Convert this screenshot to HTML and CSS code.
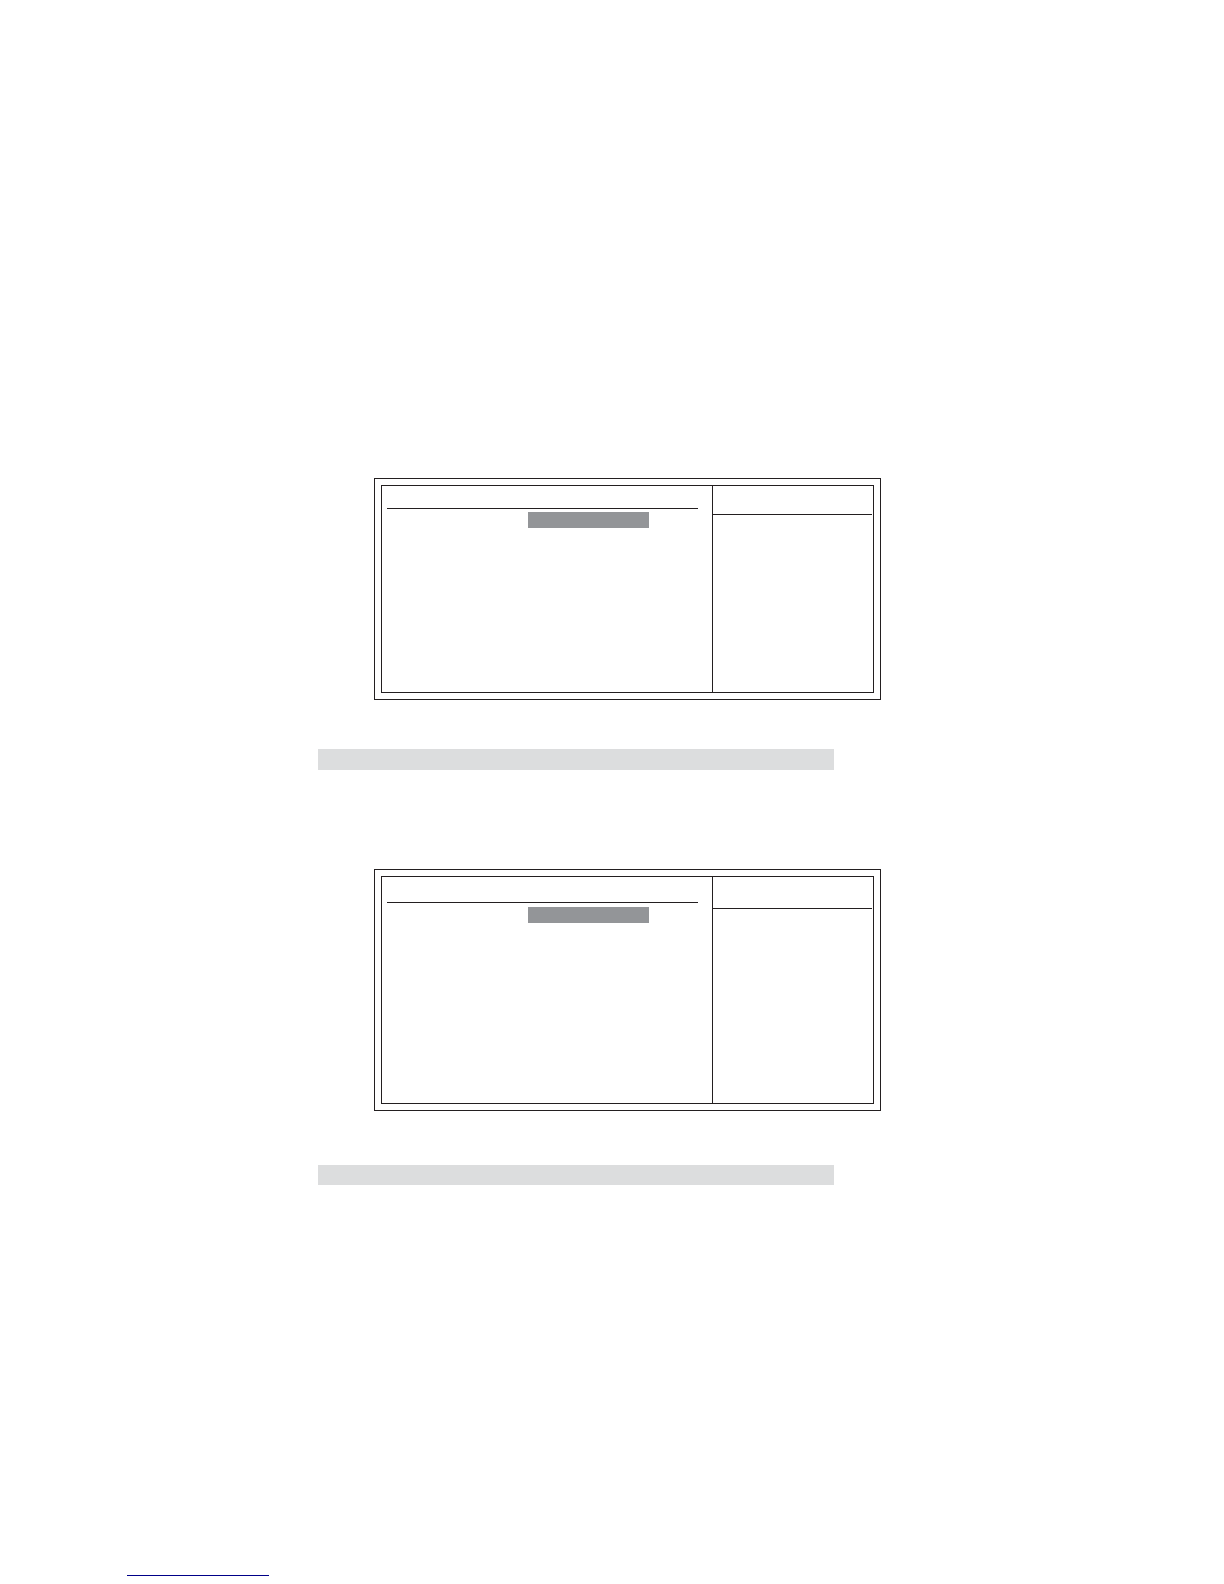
FILE: index.html
```html
<!DOCTYPE html>
<html lang="en">
<head>
    <meta charset="UTF-8">
    <meta name="viewport" content="width=device-width, initial-scale=1.0">
    <title>Setup Screens</title>
    <link rel="stylesheet" href="styles.css">
</head>
<body>
    <main class="sheet">
        <section class="panel">
            <div class="panel-inner">
                <div class="settings">
                    <div class="settings-head"></div>
                    <div class="selected"></div>
                </div>
                <aside class="help">
                    <div class="help-head"></div>
                </aside>
            </div>
        </section>
        <div class="heading-bar"></div>

        <section class="panel panel-tall">
            <div class="panel-inner">
                <div class="settings">
                    <div class="settings-head"></div>
                    <div class="selected"></div>
                </div>
                <aside class="help">
                    <div class="help-head"></div>
                </aside>
            </div>
        </section>
        <div class="heading-bar heading-bar-small"></div>
    </main>

    <footer class="footer">
        <a class="footer-link" href="#" aria-label="Home"></a>
    </footer>
</body>
</html>
```
FILE: styles.css
```css
* {
    box-sizing: border-box;
}

body {
    background-color: #ffffff;
    color: #231f20;
    font-family: "Liberation Sans", Arial, sans-serif;
    display: flex;
    flex-direction: column;
    min-height: 100vh;
    margin: 0;
}

.sheet {
    padding: 478px 343px 0 318px;
}

/* double framed setup screen */
.panel {
    margin-left: 56px;
    padding: 6px;
    border: 1px solid #231f20;
}

.panel-inner {
    display: grid;
    grid-template-columns: 1fr 161px;
    min-height: 208px;
    border: 1px solid #231f20;
}

.settings {
    padding: 0 14px 0 5px;
}

.settings-head {
    height: 23px;
    border-bottom: 1px solid #231f20;
}

.selected {
    width: 121px;
    height: 16px;
    margin: 3px 0 0 141px;
    background-color: #939598;
}

.help {
    padding-right: 1px;
    border-left: 1px solid #231f20;
}

.help-head {
    height: 29px;
    border-bottom: 1px solid #231f20;
}

.panel-tall .panel-inner {
    min-height: 228px;
}

.panel-tall .settings-head {
    height: 26px;
}

.panel-tall .selected {
    margin-top: 4px;
}

.panel-tall .help-head {
    height: 32px;
}

.heading-bar {
    height: 21px;
    margin: 49px 47px 99px 0;
    background-color: #dcddde;
}

.heading-bar-small {
    height: 20px;
    margin-top: 54px;
    margin-bottom: 0;
}

.footer {
    margin-top: auto;
    padding: 0 127px 8px;
}

.footer-link {
    display: block;
    width: 142px;
    border-bottom: 1px solid #000088;
}
```
